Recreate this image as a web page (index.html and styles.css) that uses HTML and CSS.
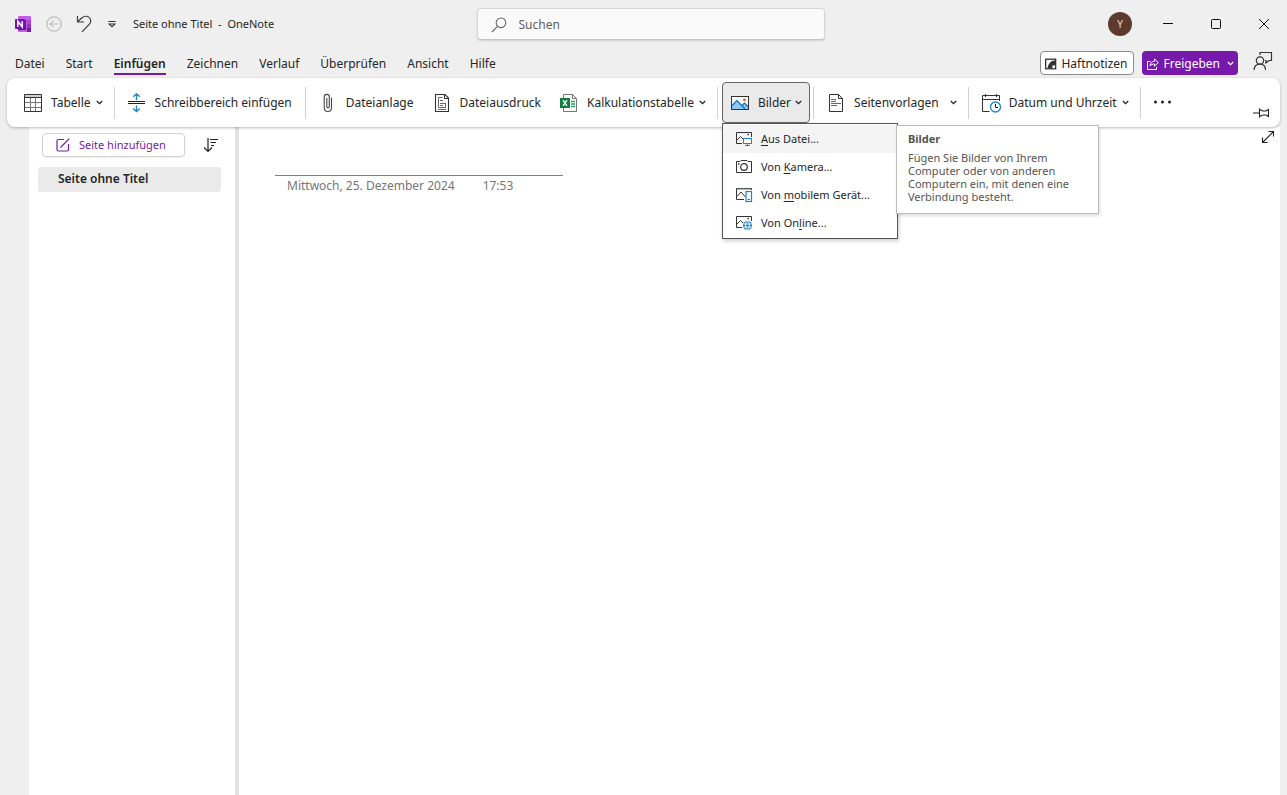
FILE: index.html
```html
<!DOCTYPE html>
<html lang="de">
<head>
<meta charset="utf-8">
<title>Seite ohne Titel - OneNote</title>
<link rel="stylesheet" href="styles.css">
</head>
<body>
<div class="app">
  <header class="titlebar">
    <div class="title-left">
      <svg class="logo" width="18" height="18" viewBox="0 0 18 18" aria-hidden="true">
        <rect x="4" y="1" width="13" height="16" rx="1" fill="#c45de6"/>
        <rect x="13" y="5" width="4" height="4" fill="#a846d6"/>
        <rect x="13" y="9" width="4" height="4" fill="#9332bf"/>
        <rect x="13" y="13" width="4" height="4" fill="#7719aa"/>
        <rect x="4" y="5" width="8" height="10" fill="#5c1385"/>
        <rect x="1" y="4" width="10" height="10" rx="1" fill="#7719aa"/>
        <path d="M3.800 11.800V6.200L8.200 11.800V6.200" fill="none" stroke="#fff" stroke-width="1.500"/>
      </svg>
      <button class="icon-btn" aria-label="Zurück" disabled>
        <svg width="16" height="16" viewBox="0 0 16 16" fill="none" stroke="#bdbdbd" stroke-width="1.200"><circle cx="8" cy="8" r="7.200"/><path d="M12.500 8H4M7.200 4.800L4 8l3.200 3.200"/></svg>
      </button>
      <button class="icon-btn" aria-label="Rückgängig">
        <svg width="16" height="18" viewBox="0 0 16 18" fill="none" stroke="#3b3b3b" stroke-width="1.200"><path d="M1.500 1v6H8M1.500 6.800L6 2.800C9 .3 12.500 1 14 3.500c1.300 2.200.8 4.300-1 6.200L6 16.800"/></svg>
      </button>
      <button class="icon-btn" aria-label="Symbolleiste anpassen">
        <svg width="8" height="8" viewBox="0 0 8 8" fill="none" stroke="#333" stroke-width="1.100"><path d="M.5 1.500h7M1 4h6L4 6.800z"/></svg>
      </button>
      <span class="doc-title">Seite ohne Titel&nbsp; -&nbsp; OneNote</span>
    </div>
    <label class="search">
      <svg width="16" height="16" viewBox="0 0 16 16" fill="none" stroke="#666" stroke-width="1.100"><circle cx="10" cy="5.800" r="4.800"/><path d="M6.500 9.300L1 15"/></svg>
      <input type="text" placeholder="Suchen" aria-label="Suchen">
    </label>
    <div class="title-right">
      <button class="avatar" aria-label="Konto">Y</button>
      <div class="window-controls">
        <button aria-label="Minimieren"><svg width="12" height="12" viewBox="0 0 12 12" stroke="#111"><path d="M1 5.500h10"/></svg></button>
        <button aria-label="Maximieren"><svg width="12" height="12" viewBox="0 0 12 12" fill="none" stroke="#111"><rect x="1.500" y="1.500" width="9" height="9" rx="1"/></svg></button>
        <button aria-label="Schließen"><svg width="12" height="12" viewBox="0 0 12 12" stroke="#111"><path d="M1 1l10 10M11 1L1 11"/></svg></button>
      </div>
    </div>
  </header>

  <div class="tabrow">
    <nav class="tabs">
      <a href="#datei">Datei</a>
      <a href="#start">Start</a>
      <a href="#einfuegen" class="active">Einfügen</a>
      <a href="#zeichnen">Zeichnen</a>
      <a href="#verlauf">Verlauf</a>
      <a href="#ueberpruefen">Überprüfen</a>
      <a href="#ansicht">Ansicht</a>
      <a href="#hilfe">Hilfe</a>
    </nav>
    <div class="tab-actions">
      <button class="pill notes">
        <svg width="12" height="12" viewBox="0 0 12 12"><rect x=".7" y="1.200" width="10" height="9.600" fill="#fff" stroke="#222" stroke-width="1.200"/><path d="M10.500 2.500C6 2.500 3.500 5 2.500 10H7l3.500-3.500z" fill="#333"/><path d="M7 10.500V7h3.500" fill="#fff" stroke="#333" stroke-width=".8"/></svg>
        Haftnotizen
      </button>
      <button class="pill share">
        <svg width="12" height="12" viewBox="0 0 12 12" fill="none" stroke="#fff"><path d="M3.500 3.500h-3v8h9v-2.500M7.500 1v2.200C4.800 3.400 3.300 5 3 8c1.200-1.500 2.500-2 4.500-2v2.200L11.300 4.600z"/></svg>
        Freigeben
        <svg class="chev" width="7" height="7" viewBox="0 0 7 7" fill="none" stroke="#fff" stroke-width="1.300"><path d="M.8 2l2.700 2.700L6.200 2"/></svg>
      </button>
      <button class="icon-btn feedback" aria-label="Feedback">
        <svg width="20" height="20" viewBox="0 0 20 20" fill="none" stroke="#333" stroke-width="1.200"><path d="M7 4V1.500h11.500v8h-2.500l-3 2.500v-2.500h-1"/><circle cx="7" cy="9.500" r="3.700"/><path d="M1 19c.3-3.600 2.500-5.800 6-5.800s5.300 2.200 5.600 5.800"/></svg>
      </button>
    </div>
  </div>

  <div class="ribbon" role="toolbar" aria-label="Einfügen">
    <button class="tool">
      <svg width="20" height="20" viewBox="0 0 20 20" fill="none"><path d="M1.500 1.500h17v3h-17z" fill="#d2d0ce"/><path d="M7.500 5v13.500M12.500 5v13.500M1.500 9.500h17M1.500 14.500h17" stroke="#777"/><path d="M1.500 1.500h17v17h-17zM1.500 4.500h17" stroke="#333"/></svg>
      Tabelle
      <svg class="chev" width="7" height="7" viewBox="0 0 7 7"><path d="M.8 2l2.700 2.700L6.200 2"/></svg>
    </button>
    <span class="sep"></span>
    <button class="tool plain">
      <svg width="20" height="20" viewBox="0 0 20 20" fill="none"><path d="M1 8.500h17M1 10.500h17" stroke="#222"/><path d="M9.500 7V.8M6.200 3.800L9.500.8l3.300 3M9.500 12.500v6M6.200 15.500l3.300 3 3.300-3" stroke="#1a86d0" stroke-width="1.400"/></svg>
      Schreibbereich einfügen
    </button>
    <span class="sep"></span>
    <button class="tool plain">
      <svg width="20" height="20" viewBox="0 0 20 20" fill="none" stroke="#444" stroke-width="1.100"><path d="M13.500 4.500v10c0 2.700-1.400 4-3.500 4s-3.800-1.300-3.800-4V4c0-1.700 1-2.600 2.600-2.600S11.300 2.300 11.300 4v9.500c0 .9-.5 1.400-1.200 1.400s-1.300-.5-1.300-1.400V5"/></svg>
      Dateianlage
    </button>
    <button class="tool plain">
      <svg width="20" height="20" viewBox="0 0 20 20" fill="none" stroke="#333" stroke-width="1.100"><path d="M3.500 1.500h9.500l3.500 3.500v13.500h-13zM12.500 1.500v4h4"/><path d="M10.500 4.500H6.500v10h7v-3.500M8 7.500h3M8 10.500h6M8 12.500h3M6 16.500h8" stroke="#666" stroke-width="1"/></svg>
      Dateiausdruck
    </button>
    <button class="tool">
      <svg width="20" height="20" viewBox="0 0 20 20" fill="none"><path d="M4.500 1.500h9l4 4v13h-13z" fill="#fff" stroke="#777"/><path d="M13.500 1.500v4h4" stroke="#777"/><path d="M12 8.500h4M12 11h4M12 13.500h4" stroke="#21a366" stroke-width="1.300"/><rect x="1" y="5" width="10" height="10" fill="#107c41"/><path d="M4 7.200l4 5.600M8 7.200l-4 5.600" stroke="#fff" stroke-width="1.400"/></svg>
      Kalkulationstabelle
      <svg class="chev" width="7" height="7" viewBox="0 0 7 7"><path d="M.8 2l2.700 2.700L6.200 2"/></svg>
    </button>
    <span class="sep"></span>
    <div class="dropdown">
      <button class="tool open" aria-expanded="true">
        <svg width="20" height="20" viewBox="0 0 20 20" fill="none"><rect x="1.500" y="3.500" width="17" height="13" fill="#fafafa"/><path d="M2 12.500L7 7.500l5 5 2.500-2.500 4 4v2H2z" fill="#8fc5ee"/><path d="M2 12.500L7 7.500l8 8.500M12 12.500l2.500-2.500 4 4" stroke="#1270bd" stroke-width="1.200"/><rect x="1.500" y="3.500" width="17" height="13" stroke="#333"/><circle cx="14.500" cy="6.800" r="1.400" fill="#e8601c"/></svg>
        Bilder
        <svg class="chev" width="7" height="7" viewBox="0 0 7 7"><path d="M.8 2l2.700 2.700L6.200 2"/></svg>
      </button>
      <div class="menu" role="menu">
        <button class="menu-item hover" role="menuitem">
          <svg width="18" height="16" viewBox="0 0 18 16" fill="none"><path d="M7 12.500H1.500v-11h15V6M2 9l3.500-3.500L8 8" stroke="#333"/><path d="M12.500 3.500h1.500" stroke="#333" stroke-width="1.500"/><rect x="8.500" y="7.500" width="8" height="5" stroke="#1a86d0" fill="#fff"/><path d="M12.500 12.500v2M10 14.500h5" stroke="#1a86d0"/></svg>
          <span><u>A</u>us Datei...</span>
        </button>
        <button class="menu-item" role="menuitem">
          <svg width="18" height="16" viewBox="0 0 18 16" fill="none" stroke="#333"><path d="M1.500 2.500h3.500l1-1h6l1 1h3.500v11h-15z"/><circle cx="9" cy="8" r="3.300" stroke-width="1.200"/><path d="M3 5h1.500" stroke-width="1.500"/></svg>
          <span>Von <u>K</u>amera...</span>
        </button>
        <button class="menu-item" role="menuitem">
          <svg width="18" height="16" viewBox="0 0 18 16" fill="none"><path d="M9 12.500H1.500v-11h15V3M2 9.500l4-4.500 4.500 5" stroke="#333"/><path d="M2 2h14" stroke="#777"/><rect x="11" y="4.500" width="5.500" height="10" stroke="#1a86d0" fill="#fff" stroke-width="1.200"/><path d="M12.500 12.500h2.500" stroke="#1a86d0"/></svg>
          <span>Von <u>m</u>obilem Gerät...</span>
        </button>
        <button class="menu-item" role="menuitem">
          <svg width="18" height="16" viewBox="0 0 18 16" fill="none"><path d="M7 12.500H1.500v-11h15V6M2 9l3.500-3.500L8 8" stroke="#333"/><path d="M12.500 3.500h1.500" stroke="#333" stroke-width="1.500"/><circle cx="12.500" cy="10.500" r="4.600" fill="#1a86d0"/><path d="M8.500 9h8M8.500 12h8" stroke="#fff" stroke-width=".9"/><ellipse cx="12.500" cy="10.500" rx="2" ry="4" stroke="#fff" stroke-width=".9"/></svg>
          <span>Von On<u>l</u>ine...</span>
        </button>
      </div>
      <div class="tooltip" role="tooltip">
        <strong>Bilder</strong>
        <p>Fügen Sie Bilder von Ihrem Computer oder von anderen Computern ein, mit denen eine Verbindung besteht.</p>
      </div>
    </div>
    <span class="sep"></span>
    <button class="tool">
      <svg width="20" height="20" viewBox="0 0 20 20" fill="none" stroke="#333"><path d="M3.500 1.500h9l4 4v13h-13zM12.500 1.500v4h4"/><path d="M5 6.500h5M5 8.500h5M5 10.500h10M5 12.500h6" stroke="#666"/></svg>
      Seitenvorlagen
      <svg class="chev apart" width="7" height="7" viewBox="0 0 7 7"><path d="M.8 2l2.700 2.700L6.200 2"/></svg>
    </button>
    <span class="sep"></span>
    <button class="tool">
      <svg width="20" height="20" viewBox="0 0 20 20" fill="none"><path d="M8.500 18.500h-7v-16h17V8M1.500 6.500h17M4.500 1v3M15.500 1v3" stroke="#333"/><circle cx="14.500" cy="14" r="5" fill="#fff" stroke="#1a86d0" stroke-width="1.300"/><path d="M14.500 11v3.500H17" stroke="#222"/></svg>
      Datum und Uhrzeit
      <svg class="chev" width="7" height="7" viewBox="0 0 7 7"><path d="M.8 2l2.700 2.700L6.200 2"/></svg>
    </button>
    <span class="sep"></span>
    <button class="tool" aria-label="Weitere Befehle">
      <svg width="20" height="20" viewBox="0 0 20 20" fill="#222"><circle cx="2.500" cy="9" r="1.500"/><circle cx="9.500" cy="9" r="1.500"/><circle cx="16.500" cy="9" r="1.500"/></svg>
    </button>
    <button class="icon-btn pin" aria-label="Menüband anheften">
      <svg width="16" height="10" viewBox="0 0 16 10" fill="none" stroke="#222" stroke-width="1.100"><path d="M0 5h6M6.500.5v9M6.500 1.500l3.500 1.500h3l2.500-1.500v7L13 7h-3l-3.500 1.500"/></svg>
    </button>
  </div>

  <main class="workspace">
    <aside class="pages">
      <div class="pages-head">
        <button class="add-page">
          <svg width="14" height="14" viewBox="0 0 14 14" fill="none" stroke="#7719aa" stroke-width="1.200"><path d="M8 1.500H2.500c-1 0-1.500.5-1.500 1.500v8.500c0 1 .5 1.500 1.500 1.500H11c1 0 1.500-.5 1.500-1.500V6M13.300.7L6 8l-1.500 1.500"/></svg>
          Seite hinzufügen
        </button>
        <button class="icon-btn" aria-label="Seiten sortieren">
          <svg width="16" height="16" viewBox="0 0 16 16" fill="none" stroke="#222" stroke-width="1.200"><path d="M5 1v13.500M1 10.500l4 4 4-4M7 2.500h8M7.500 5.500h5.500M8 8.500h3"/></svg>
        </button>
      </div>
      <a class="page-link" href="#seite">Seite ohne Titel</a>
    </aside>
    <section class="canvas">
      <header class="note-head">
        <span>Mittwoch, 25. Dezember 2024</span>
        <span>17:53</span>
      </header>
      <button class="icon-btn expand" aria-label="Ganzseitenansicht">
        <svg width="14" height="14" viewBox="0 0 14 14" fill="none" stroke="#222" stroke-width="1.100"><path d="M1.500 12.500l11-11M7.500 1.500h5v5M1.500 7.500v5h5"/></svg>
      </button>
    </section>
  </main>
</div>
</body>
</html>
```

FILE: styles.css
```css
* { box-sizing: border-box; }
body {
  margin: 0;
  background: #efefef;
  color: #262626;
  font: 12px/16px "Noto Sans", sans-serif;
}
button, input { font: inherit; color: inherit; }
button {
  display: flex;
  align-items: center;
  margin: 0;
  padding: 0;
  border: 0;
  background: none;
  white-space: nowrap;
}
a { color: inherit; text-decoration: none; }
svg { flex: none; display: block; }
.icon-btn { justify-content: center; }

.app { display: flex; flex-direction: column; min-height: 100vh; }

.titlebar {
  display: grid;
  grid-template-columns: 1fr 348px 1fr;
  align-items: center;
  height: 48px;
  padding-left: 14px;
}
.title-left { display: flex; align-items: center; gap: 14px; }
.title-left .icon-btn + .icon-btn { margin-right: 2px; }
.doc-title { margin-left: 1px; white-space: nowrap; font-size: 11px; }
.search {
  display: flex;
  align-items: center;
  gap: 12px;
  height: 32px;
  padding: 1px 13px 0;
  border: 1px solid #d6d6d6;
  border-bottom-color: #c4c4c4;
  border-radius: 4px;
  background: #fafafa;
  box-shadow: 0 1px 2px #0002;
}
.search input {
  flex: 1;
  min-width: 0;
  padding: 0;
  border: 0;
  outline: 0;
  background: none;
}
.search input::placeholder { color: #616161; opacity: 1; }
.title-right { display: flex; justify-content: flex-end; align-items: center; gap: 12px; }
.avatar {
  justify-content: center;
  width: 24px;
  height: 24px;
  border-radius: 50%;
  background: #5e392d;
  color: #e8d8d0;
  font-size: 10px;
}
.window-controls { display: flex; }
.window-controls button { justify-content: center; width: 48px; height: 48px; }
.window-controls button:last-child { margin-right: -1px; }

.tabrow {
  display: flex;
  justify-content: space-between;
  height: 30px;
  padding: 0 14px 0 15px;
}
.tabs { display: flex; gap: 21px; align-items: flex-start; padding-top: 8px; }
.tabs a { padding-bottom: 1px; border-bottom: 2px solid transparent; }
.tabs .active { border-color: #7719aa; font-weight: 600; }
.tab-actions { display: flex; align-items: flex-start; gap: 8px; padding-top: 3px; }
.pill { height: 24px; border-radius: 4px; gap: 4px; padding: 1px 6px 0 4px; }
.notes { border: 1px solid #8a8a8a; background: #fff; }
.share { background: #7719aa; color: #fff; padding: 1px 4px 0 5px; }
.share .chev { margin-left: 3px; }
.feedback { margin-left: 7px; }

.ribbon {
  position: relative;
  z-index: 2;
  display: flex;
  align-items: center;
  height: 49px;
  margin: 0 7px;
  padding: 0 10px 0 8px;
  border-radius: 8px;
  background: #fff;
  box-shadow: 0 1px 3px #0004;
}
.tool { gap: 8px; height: 41px; padding: 0 8px; border-radius: 4px; }
.tool.plain { padding-right: 10px; }
.tool .chev { margin-left: -3px; fill: none; stroke: #222; stroke-width: 1.3px; }
.tool .chev.apart { margin-left: 3px; }
.tool.open { padding: 0 7px; border: 1px solid #666; background: #eaeaea; }
.tool.open .chev { margin-left: -4px; }
.sep { width: 1px; height: 32px; margin: 0 4px 0 3px; background: #d1d1d1; }
.pin { align-self: flex-end; margin: 0 1px 9px auto; }

.dropdown { position: relative; }
.menu {
  position: absolute;
  top: 100%;
  left: 0;
  width: 176px;
  padding: 1px 0;
  border: 1px solid #555;
  background: #fff;
  box-shadow: 1px 2px 4px #0003;
  font-size: 11px;
}
.menu-item { gap: 8px; width: 100%; height: 28px; padding: 0 12px; }
.menu-item.hover { background: #f4f4f4; }
.menu-item u { text-underline-offset: 2px; }
.tooltip {
  position: absolute;
  top: 43px;
  left: 174px;
  width: 203px;
  padding: 6px 11px 10px;
  border: 1px solid #bdbdbd;
  background: #fff;
  color: #555;
  font-size: 11px;
  line-height: 13px;
  box-shadow: 1px 2px 3px #0002;
}
.tooltip p { margin: 6px 0 0; }

.workspace {
  flex: 1;
  display: grid;
  grid-template-columns: 210px 1fr;
  margin: 0 7px 0 29px;
  background: #fff;
}
.pages { padding: 6px 14px 0 9px; border-right: 4px solid #e3e3e3; }
.pages-head { display: flex; justify-content: space-between; align-items: center; padding: 0 2px 0 4px; }
.add-page {
  gap: 9px;
  height: 24px;
  padding: 0 18px 0 13px;
  border: 1px solid #d1d1d1;
  border-radius: 4px;
  color: #7719aa;
  font-size: 11px;
  box-shadow: 0 1px 2px #0001;
}
.page-link {
  display: block;
  margin-top: 10px;
  padding: 4px 20px 5px;
  border-radius: 3px;
  background: #eaeaea;
  font-weight: 600;
}
.canvas { display: flex; justify-content: space-between; align-items: flex-start; padding: 0 5px 0 36px; }
.note-head {
  display: flex;
  gap: 28px;
  width: 288px;
  margin-top: 48px;
  padding: 2px 12px;
  border-top: 1px solid #808080;
  color: #767676;
  white-space: nowrap;
}
.expand { margin-top: 3px; }
```
